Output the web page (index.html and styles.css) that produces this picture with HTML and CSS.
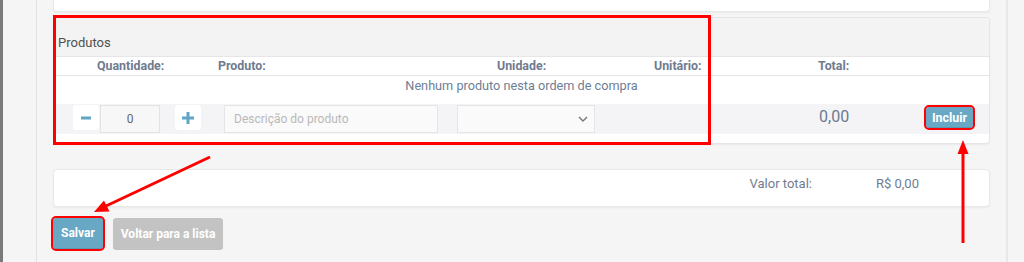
FILE: index.html
```html
<!DOCTYPE html>
<html lang="pt-BR">
<head>
    <meta charset="UTF-8">
    <meta name="viewport" content="width=device-width, initial-scale=1.0">
    <title>Ordem de compra</title>
    <link rel="stylesheet" href="styles.css">
</head>
<body>
    <div class="layout">
        <div class="edge"></div>
        <div class="gutter"></div>

        <main class="content">
            <div class="card card-top"></div>

            <section class="panel">
                <div class="panel-heading">Produtos</div>

                <div class="cols cols-head">
                    <div class="c1">Quantidade:</div>
                    <div class="c2">Produto:</div>
                    <div class="c3">Unidade:</div>
                    <div class="c4">Unitário:</div>
                    <div class="c5">Total:</div>
                    <div class="c6"></div>
                </div>

                <div class="empty-row">Nenhum produto nesta ordem de compra</div>

                <div class="cols cols-entry">
                    <div class="c1 qty">
                        <button class="step">
                            <svg width="12" height="12" viewBox="0 0 12 12"><rect x="1" y="4.5" width="10" height="3" fill="#5fa6c4"/></svg>
                        </button>
                        <input class="qty-input" type="text" value="0">
                        <button class="step step-plus">
                            <svg width="12" height="12" viewBox="0 0 12 12"><rect x="0" y="4.5" width="12" height="3" fill="#5fa6c4"/><rect x="4.5" y="0" width="3" height="12" fill="#5fa6c4"/></svg>
                        </button>
                    </div>
                    <div class="c2">
                        <input class="field field-desc" type="text" placeholder="Descrição do produto">
                    </div>
                    <div class="c3">
                        <div class="field field-select">
                            <svg width="10" height="6" viewBox="0 0 10 6"><path d="M1 1l4 4 4-4" fill="none" stroke="#777" stroke-width="1.4"/></svg>
                        </div>
                    </div>
                    <div class="c4"></div>
                    <div class="c5 amount">0,00</div>
                    <div class="c6">
                        <button class="btn btn-primary btn-small marked">Incluir</button>
                    </div>
                </div>
            </section>

            <div class="card card-total">
                <span class="total-label">Valor total:</span>
                <span>R$ 0,00</span>
            </div>

            <div class="actions">
                <button class="btn btn-primary marked">Salvar</button>
                <button class="btn btn-muted">Voltar para a lista</button>
            </div>
        </main>

        <div class="aside"></div>
    </div>

    <!-- annotation marks drawn over the screenshot -->
    <svg class="marks" width="1024" height="262" viewBox="0 0 1024 262">
        <rect x="54.5" y="16.5" width="655" height="127" fill="none" stroke="#f00" stroke-width="3"/>
        <line x1="210" y1="157" x2="106" y2="206" stroke="#f00" stroke-width="3"/>
        <polygon points="94,212 109.5,211.5 104,200.5" fill="#f00"/>
        <line x1="963" y1="243" x2="963" y2="152" stroke="#f00" stroke-width="3"/>
        <polygon points="963,140 957.5,154 968.5,154" fill="#f00"/>
    </svg>
</body>
</html>
```

FILE: styles.css
```css
body {
    margin: 0;
    height: 262px;
    overflow: hidden;
    background: #f5f5f5;
    font-family: Roboto, "Liberation Sans", Arial, sans-serif;
    font-size: 13px;
    color: #6f7b8f;
    position: relative;
}

.layout {
    display: flex;
    height: 262px;
}

.edge {
    width: 3px;
    background: #7a7a7a;
}

.gutter {
    width: 33px;
    border-right: 1px solid #e3e3e3;
}

.content {
    flex: 1;
    padding: 0 16px;
}

.aside {
    width: 16px;
    border-left: 2px solid #e8e8e8;
}

.card {
    background: #fff;
    border: 1px solid #e9e9e9;
    border-radius: 4px;
    box-shadow: 0 1px 2px rgba(0, 0, 0, 0.05);
}

.card-top {
    height: 11px;
    border-top: none;
    border-radius: 0 0 4px 4px;
}

/* products panel */
.panel {
    margin-top: 5px;
    background: #fff;
    border: 1px solid #e6e6e6;
    border-radius: 4px;
    box-shadow: 0 1px 2px rgba(0, 0, 0, 0.05);
    padding-bottom: 9px;
}

.panel-heading {
    background: #f3f3f3;
    height: 38px;
    box-sizing: border-box;
    padding: 16px 0 0 4px;
    line-height: 18px;
    color: #505050;
    border-radius: 4px 4px 0 0;
}

.cols {
    display: grid;
    grid-template-columns: 158px 236px 162px 160px 130px 1fr;
}

.cols-head {
    border-top: 1px solid #e6e6e6;
    border-bottom: 1px solid #e6e6e6;
    line-height: 18px;
    font-size: 12.4px;
    font-weight: bold;
    color: #6f7b8f;
}

.cols-head .c1 { padding-left: 43px; }
.cols-head .c2 { padding-left: 6px; }
.cols-head .c3 { padding-left: 49px; }
.cols-head .c4 { padding-left: 44px; }
.cols-head .c5 { padding-left: 48px; }

.empty-row {
    height: 28px;
    line-height: 19px;
    font-size: 12.7px;
    text-align: center;
    color: #6f7e94;
}

.cols-entry {
    background: #f4f4f6;
    height: 30px;
    padding-top: 1px;
    box-sizing: border-box;
}

.cols-entry .c1 { padding-left: 19px; }
.cols-entry .c2 { padding-left: 12px; }
.cols-entry .c3 { padding-left: 9px; }
.cols-entry .c6 { padding-left: 26px; padding-top: 2px; }

.qty {
    display: flex;
    align-items: flex-start;
}

.step {
    width: 26px;
    height: 25px;
    border: none;
    border-radius: 3px;
    background: #fff;
    padding: 0;
    display: flex;
    align-items: center;
    justify-content: center;
}

.step-plus {
    margin-left: 15px;
}

.qty-input {
    width: 60px;
    height: 28px;
    box-sizing: border-box;
    margin-left: 1px;
    border: 1px solid #e3e3e3;
    background: #f7f7f7;
    text-align: center;
    font-family: inherit;
    font-size: 12px;
    color: #666;
    padding: 0;
}

.field {
    height: 28px;
    box-sizing: border-box;
    border: 1px solid #e5e5e5;
    background: #fafafa;
    font-family: inherit;
    font-size: 12px;
}

.field-desc {
    width: 214px;
    padding: 0 9px;
    color: #555;
}

.field-desc::placeholder {
    color: #b9b9b9;
}

.field-select {
    width: 138px;
    display: flex;
    align-items: center;
    justify-content: flex-end;
    padding-right: 6px;
}

.amount {
    padding-left: 49px;
    font-size: 16px;
    line-height: 24px;
    color: #6c7a8e;
}

/* totals */
.card-total {
    margin-top: 25px;
    height: 31px;
    display: flex;
    justify-content: flex-end;
    gap: 64px;
    padding: 5px 70px 0 0;
    line-height: 18px;
}

.total-label {
    color: #707d90;
}

/* buttons */
.actions {
    display: flex;
    gap: 10px;
    margin-top: 11px;
}

.btn {
    height: 31px;
    border: none;
    border-radius: 3px;
    padding: 0 8px;
    font-family: inherit;
    font-size: 12px;
    font-weight: bold;
    color: #fff;
}

.btn-primary {
    background: #68a8c5;
    border-bottom: 1px solid #5a97b3;
}

.btn-muted {
    height: 32px;
    background: #c3c3c3;
    padding: 0 8px;
}

.btn-small {
    height: 21px;
    padding: 0 6px;
    font-size: 12.4px;
}

.marked {
    outline: 2px solid #f00;
    outline-offset: 0;
}

.marks {
    position: absolute;
    top: 0;
    left: 0;
    pointer-events: none;
}
```
